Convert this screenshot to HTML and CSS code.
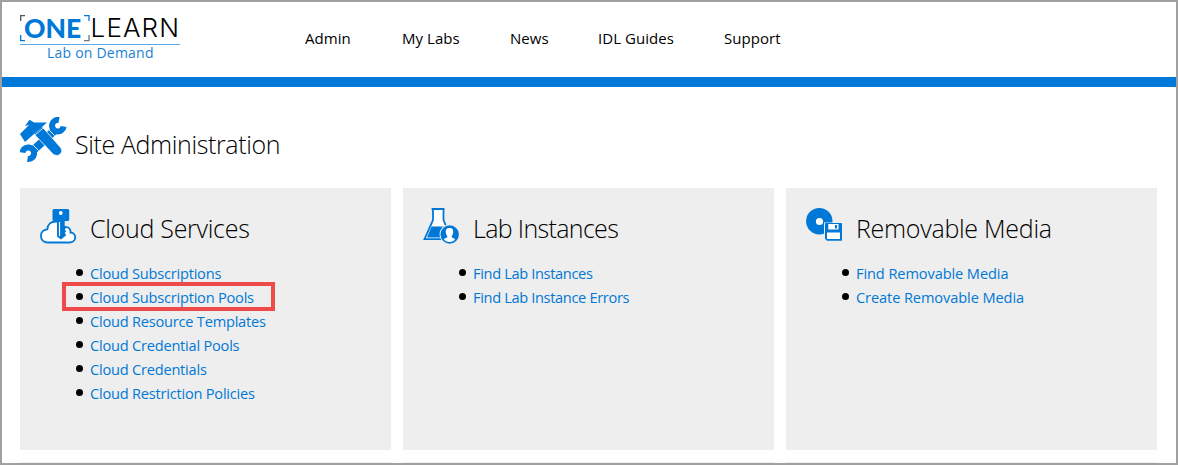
FILE: index.html
```html
<!DOCTYPE html>
<html lang="en">
<head>
<meta charset="utf-8">
<title>Site Administration</title>
<link rel="stylesheet" href="styles.css">
</head>
<body>
<div class="page">
  <header class="header">
    <div class="logo">
      <div class="logo-name">
        <svg class="logo-brackets" width="70" height="27" viewBox="0 0 70 27" fill="none" stroke-width="1.300">
          <path d="M.7 6V.7H5" stroke="#555"/><path d="M.7 20v5.600H5M64 .7h5V6" stroke="#0078d7"/><path d="M69 20v5.600h-5" stroke="#777"/>
        </svg>
        <span class="logo-one">ONE</span><span class="logo-learn">LEARN</span>
      </div>
      <div class="logo-tag">Lab on Demand</div>
    </div>
    <nav class="nav">
      <a class="nav-link admin">Admin</a><a class="nav-link labs">My Labs</a><a class="nav-link news">News</a><a class="nav-link guides">IDL Guides</a><a class="nav-link support">Support</a>
    </nav>
  </header>
  <main class="main">
    <div class="title-row">
      <svg class="title-icon" width="47" height="47" viewBox="0 0 47 47">
        <g fill="none" stroke="#0078d7">
          <path d="M39 3A5.800 5.800 0 1 0 43.600 9.500" stroke-width="6"/>
          <path d="M2.500 35.500A5.800 5.800 0 1 1 7.500 42" stroke-width="6"/>
          <path d="M35 13L12 34.500" stroke-width="8"/>
        </g>
        <path d="M28.500 12.500l6 6M12.500 27.500l6 6" stroke="#fff" stroke-width=".900"/>
        <path d="M14 17L22 9.500 41 31q2 3-.5 6-3.500 3-7 .5z" fill="#0078d7" stroke="#fff" stroke-width=".800"/>
        <path d="M0 17L11.500 5.500 27 5.500 5 25z" fill="#0078d7"/>
        <path d="M5 9L9.500 2.700 14 5.500 9 8z" fill="#0078d7"/>
        <path d="M5 26.500L27.500 7.500" stroke="#fff" stroke-width=".800"/>
      </svg>
      <h1 class="title">Site Administration</h1>
    </div>
    <div class="cards">
      <section class="card">
        <div class="card-head">
          <svg class="card-icon" width="38" height="38" viewBox="0 0 38 38">
            <path d="M8 34.500C3.500 34.500 .900 31.500 .900 27.800s3-6.500 6.500-6.500C7.400 16 11.500 13.500 15.500 13.500c4 0 7 2 8.500 5.500 4-1 7 2 6.500 5.500 3 0 4.700 2.300 4.700 5 0 3-2.500 5-6 5z" fill="#fff" stroke="#0078d7" stroke-width="1.800"/>
            <path d="M14 1h13.700q1.500 0 1.500 1.500v9q0 1.500-1.500 1.500h-3v5.500l1.500 1.500-1.500 1.500 1.500 2-1.500 1.500 1.500 2-1.500 1.500-3.700 3-4-3V13h-3q-1.500 0-1.500-1.500v-9Q12.500 1 14 1z" fill="#0078d7"/>
            <circle cx="20.800" cy="5" r="1.900" fill="#fff"/><path d="M19.500 14v14" stroke="#fff" stroke-width="1.200"/>
          </svg>
          <h2 class="card-title cloud">Cloud Services</h2>
        </div>
        <ul class="links">
          <li><a>Cloud Subscriptions</a></li>
          <li class="marked"><a>Cloud Subscription Pools</a></li>
          <li><a>Cloud Resource Templates</a></li>
          <li><a>Cloud Credential Pools</a></li>
          <li><a>Cloud Credentials</a></li>
          <li><a>Cloud Restriction Policies</a></li>
        </ul>
      </section>
      <section class="card">
        <div class="card-head">
          <svg class="card-icon" width="38" height="38" viewBox="0 0 38 38">
            <path d="M8.500 1.200h13M10 1v11L1.500 31.200h27L20.500 12V1z" fill="#fff" stroke="#0078d7" stroke-width="1.800"/>
            <path d="M8.500 18.500h13l6 11H4z" fill="#0078d7"/>
            <circle cx="26.700" cy="26.500" r="10.200" fill="#eee"/><circle cx="26.700" cy="26.500" r="9.200" fill="#0078d7"/>
            <path d="M26.500 20c3 0 4 2 3.700 4.500-.2 1.800-.8 2.500-1.400 3.200v1.800c1.700.5 3 1 3.200 2.200Q30 34 26.500 34t-5.500-2.300c.2-1.200 1.500-1.700 3.200-2.200v-1.800c-.6-.7-1.200-1.400-1.400-3.200C22.500 22 23.500 20 26.500 20z" fill="#fff"/>
          </svg>
          <h2 class="card-title lab">Lab Instances</h2>
        </div>
        <ul class="links lab-links">
          <li><a>Find Lab Instances</a></li>
          <li><a>Find Lab Instance Errors</a></li>
        </ul>
      </section>
      <section class="card">
        <div class="card-head">
          <svg class="card-icon" width="38" height="38" viewBox="0 0 38 38">
            <circle cx="13.300" cy="13.200" r="13.200" fill="#0078d7"/><circle cx="13.500" cy="13.500" r="3.600" fill="#fff"/>
            <path d="M18 14.500h19v19H18z" fill="#eee"/>
            <path d="M19.500 15h16q.5 0 .5.500v16.700q0 .5-.5.500H21l-2-2V15.500q0-.5.500-.5z" fill="#0078d7"/>
            <path d="M22.300 16h10.200v5.500H22.300zM21 24.500h13v6.500H21z" fill="#fff"/><path d="M29 17h2v3.500h-2z" fill="#0078d7"/>
          </svg>
          <h2 class="card-title media">Removable Media</h2>
        </div>
        <ul class="links media-links">
          <li><a>Find Removable Media</a></li>
          <li><a>Create Removable Media</a></li>
        </ul>
      </section>
      <section class="card"></section><section class="card"></section><section class="card"></section>
    </div>
  </main>
</div>
</body>
</html>
```
FILE: styles.css
```css
*, *::before, *::after { box-sizing: border-box; }
body { margin: 0; font-family: "Open Sans", "Noto Sans", sans-serif; color: #000; background: #fff; }
.page { height: 465px; overflow: hidden; border: 2px solid #a0a0a0; }
.header { height: 85px; display: flex; border-bottom: 10px solid #0078d7; }
.logo { width: 160px; margin: 13px 0 0 18px; }
.logo-name { position: relative; height: 30px; border-bottom: 1px solid #5ba9e6; display: flex; white-space: nowrap; }
.logo-brackets { position: absolute; left: 0; top: 0; }
.logo-one { width: 73px; padding-left: 4px; font: 900 26.500px/26px Lato, sans-serif; color: #0078d7; }
.logo-learn { font: 300 26px/26px Inter, sans-serif; letter-spacing: 1.1px; }
.logo-tag { color: #1a7fd4; font-size: 14px; letter-spacing: .22px; line-height: 16px; padding-left: 27px; white-space: nowrap; }
.nav { display: flex; margin: 24px 0 0 125px; font-size: 15px; letter-spacing: .05px; line-height: 24px; white-space: nowrap; }
.admin { width: 97px; }
.labs { width: 108px; }
.news { width: 88px; }
.guides { width: 126px; }
.main { padding: 28px 18px 0; }
.title-row { display: flex; height: 73px; }
.title-icon { margin-top: 2px; }
.title { margin: 9px 0 0 8px; font-size: 25px; letter-spacing: -.38px; font-weight: 300; line-height: 40px; white-space: nowrap; }
.cards { display: grid; grid-template-columns: repeat(3, 371px); grid-auto-rows: 262px; gap: 12px; }
.card { background: #eee; }
.card-head { display: flex; padding: 20px 0 0 20px; height: 73px; }
.card-title { margin: 0 0 0 12px; font-size: 25px; letter-spacing: -.28px; font-weight: 300; line-height: 40px; white-space: nowrap; }
.lab { letter-spacing: -.66px; }
.links { list-style: none; margin: 0; padding: 0 0 0 55px; font-size: 14.600px; letter-spacing: -.22px; line-height: 24px; color: #0078d7; white-space: nowrap; }
.lab-links { letter-spacing: -.34px; }
.media-links { letter-spacing: -.1px; }
.links li { display: flex; align-items: center; height: 24px; position: relative; }
.links li::before { content: ""; width: 7px; height: 7px; border-radius: 50%; background: #000; margin: -1px 7px 0 1px; }
.links .marked::after { content: ""; position: absolute; left: -13px; top: -3px; width: 213px; height: 29px; border: 4px solid #ef4a4a; }
```
